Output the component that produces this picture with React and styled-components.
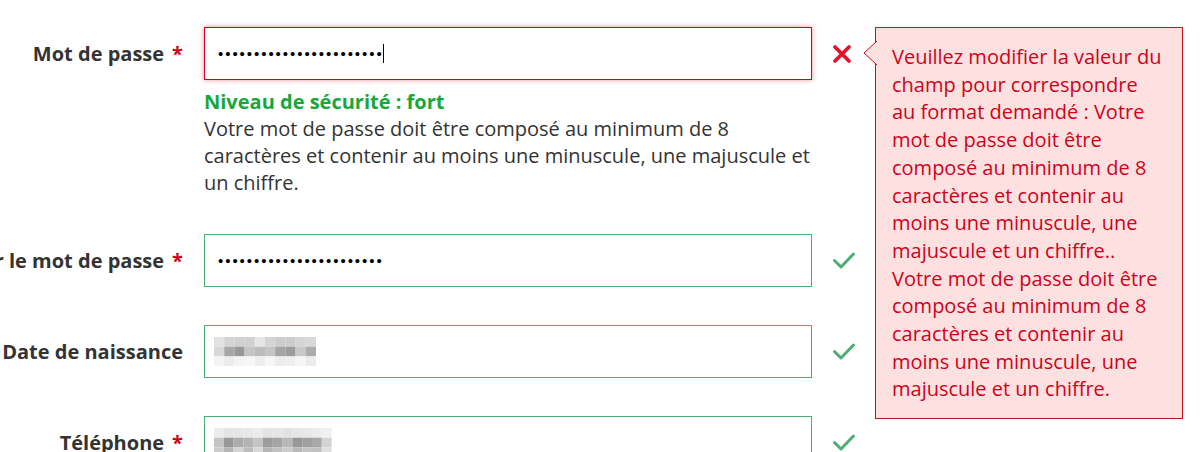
import React from "react"
import styled, { createGlobalStyle } from "styled-components"

const GlobalStyle = createGlobalStyle`
  html, body {
    margin: 0;
    padding: 0;
    background: #fff;
    overflow: hidden;
  }
  body {
    font-family: "Open Sans", "Liberation Sans", sans-serif;
    color: #333;
  }
`

const RED = "#d0021b"
const GREEN = "#4cae72"

const Form = styled.div`
  padding-top: 27px;
  display: flex;
  flex-direction: column;
  gap: 38px;
`

const Row = styled.div`
  display: flex;
  align-items: flex-start;
`

const Label = styled.div`
  width: 183px;
  height: 53px;
  flex-shrink: 0;
  display: flex;
  align-items: center;
  justify-content: flex-end;
  margin-right: 21px;
  white-space: nowrap;
  font-size: 20px;
  font-weight: 700;
  color: #333;
`

const Star = styled.span`
  color: ${RED};
  margin-left: 8px;
`

const Field = styled.div`
  width: 608px;
  flex-shrink: 0;
`

const Input = styled.div`
  box-sizing: border-box;
  height: 53px;
  border: 1px solid ${p => (p.$error ? RED : GREEN)};
  box-shadow: ${p => (p.$error ? "0 0 5px rgba(230, 0, 20, 0.45)" : "none")};
  background: #fff;
  display: flex;
  align-items: center;
  padding-left: ${p => (p.$masked ? 13 : 9)}px;
`

const Dots = styled.span`
  font-family: "Liberation Sans", sans-serif;
  font-size: 15px;
  letter-spacing: 1.95px;
  color: #000;
  line-height: 1;
`

const Caret = styled.span`
  display: inline-block;
  width: 1px;
  height: 19px;
  background: #000;
  margin-left: -1px;
`

const Strength = styled.div`
  margin-top: 8px;
  font-size: 20px;
  line-height: 27px;
  font-weight: 700;
  color: #16a83a;
`

const Help = styled.div`
  font-size: 20px;
  line-height: 27px;
  color: #333;
`

const Status = styled.div`
  position: relative;
  width: 42px;
  height: 53px;
  margin-left: 20px;
  display: flex;
  align-items: center;
`

const Bubble = styled.div`
  position: absolute;
  left: 43px;
  top: 0;
  box-sizing: border-box;
  width: 308px;
  padding: 15px 18px 15px 16px;
  background: #fde1e1;
  border: 1px solid #c8101e;
  color: ${RED};
  font-size: 20px;
  line-height: 27.7px;
  z-index: 2;
`

const Arrow = styled.svg`
  position: absolute;
  left: -13px;
  top: 13px;
`

const CheckIcon = () => (
  <svg width="24" height="20" viewBox="0 0 24 20">
    <polyline
      points="2.5,9.5 9,16 21.5,3"
      fill="none"
      stroke={GREEN}
      strokeWidth="3"
      strokeLinecap="round"
      strokeLinejoin="round"
    />
  </svg>
)

const CrossIcon = () => (
  <svg width="20" height="20" viewBox="0 0 20 20">
    <path
      d="M3 3 L17 17 M17 3 L3 17"
      stroke="#e2132e"
      strokeWidth="3.8"
      strokeLinecap="round"
    />
  </svg>
)

const Mosaic = ({ rows, cell = 10, h = 10 }) => (
  <svg width={rows[0].length * cell} height={rows.length * h}>
    {rows.map((row, r) =>
      row.map((g, c) => (
        <rect
          key={r + "-" + c}
          x={c * cell}
          y={r * h}
          width={cell}
          height={h}
          fill={`rgb(${g},${g},${g})`}
        />
      ))
    )}
  </svg>
)

const dateMosaic = [
  [0xe2, 0xd4, 0xd0, 0xd0, 0xe6, 0xd4, 0xcc, 0xcc, 0xd4, 0xd8],
  [0xd8, 0xa8, 0x98, 0xc4, 0xbc, 0xc4, 0xa4, 0x9c, 0xc8, 0xac],
  [0xf4, 0xec, 0xf4, 0xf6, 0xee, 0xf6, 0xec, 0xee, 0xf6, 0xec],
]

const phoneMosaic = [
  [0xec, 0xe4, 0xe6, 0xe8, 0xec, 0xe4, 0xe6, 0xe2, 0xe6, 0xe8, 0xec, 0xf0],
  [0xc4, 0x98, 0xac, 0xb4, 0xc4, 0x9c, 0xa4, 0xb8, 0x98, 0xa0, 0xa8, 0xd4],
  [0xcc, 0xb4, 0xd4, 0xbc, 0xd8, 0xb4, 0xc0, 0xcc, 0xb8, 0xc4, 0xc0, 0xe0],
]

const DOTS = "•".repeat(23)

export default function App() {
  return (
    <>
      <GlobalStyle />
      <Form>
        <Row>
          <Label>
            Mot de passe<Star>*</Star>
          </Label>
          <Field>
            <Input $error $masked>
              <Dots>{DOTS}</Dots>
              <Caret />
            </Input>
            <Strength>Niveau de sécurité : fort</Strength>
            <Help>
              Votre mot de passe doit être composé au minimum de 8 caractères et
              contenir au moins une minuscule, une majuscule et un chiffre.
            </Help>
          </Field>
          <Status>
            <CrossIcon />
            <Bubble>
              <Arrow width="14" height="24" viewBox="0 0 14 24">
                <path d="M14 0 L1 12 L14 24" fill="#fde1e1" stroke="#c8101e" strokeWidth="1" />
              </Arrow>
              Veuillez modifier la valeur du champ pour correspondre au format
              demandé : Votre mot de passe doit être composé au minimum de 8
              caractères et contenir au moins une minuscule, une majuscule et un
              chiffre.. Votre mot de passe doit être composé au minimum de 8
              caractères et contenir au moins une minuscule, une majuscule et un
              chiffre.
            </Bubble>
          </Status>
        </Row>

        <Row>
          <Label>
            Confirmer le mot de passe<Star>*</Star>
          </Label>
          <Field>
            <Input $masked>
              <Dots>{DOTS}</Dots>
            </Input>
          </Field>
          <Status>
            <CheckIcon />
          </Status>
        </Row>

        <Row>
          <Label>Date de naissance</Label>
          <Field>
            <Input>
              <Mosaic rows={dateMosaic} cell={10.2} h={9.7} />
            </Input>
          </Field>
          <Status>
            <CheckIcon />
          </Status>
        </Row>

        <Row>
          <Label>
            Téléphone<Star>*</Star>
          </Label>
          <Field>
            <Input>
              <Mosaic rows={phoneMosaic} cell={9.8} h={9.7} />
            </Input>
          </Field>
          <Status>
            <CheckIcon />
          </Status>
        </Row>
      </Form>
    </>
  )
}
